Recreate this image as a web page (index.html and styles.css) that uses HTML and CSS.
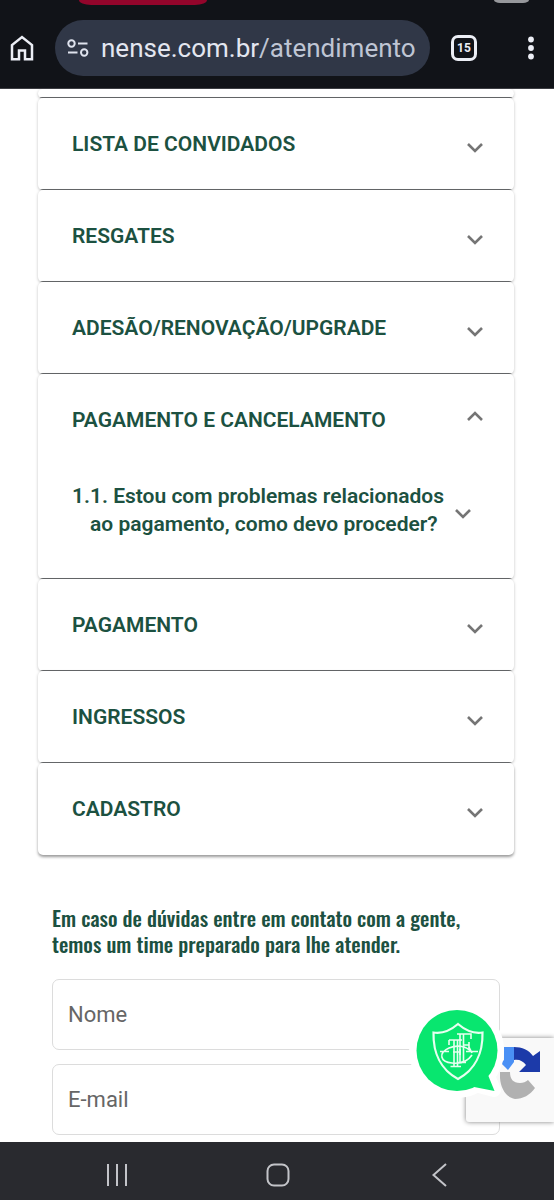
FILE: index.html
```html
<!DOCTYPE html>
<html lang="pt-BR">
<head>
<meta charset="utf-8">
<meta name="viewport" content="width=device-width, initial-scale=1">
<title>Atendimento</title>
<link rel="stylesheet" href="styles.css">
</head>
<body>
<svg class="defs" width="0" height="0" aria-hidden="true">
  <symbol id="chevron" viewBox="0 0 24 24"><path d="M5 12l7 7 7-7" fill="none" stroke="currentColor" stroke-width="2.6"/></symbol>
</svg>

<header class="browser">
  <div class="status"><span class="status-rec"></span><span class="status-battery"></span></div>
  <div class="toolbar">
    <button class="icon-button" aria-label="Página inicial">
      <svg width="24" height="26" viewBox="0 0 24 26"><path d="M2 24.200V10L12 2l10 8v14.200h-7v-8.700H9v8.700z" fill="none" stroke="#eceef5" stroke-width="2.500"/></svg>
    </button>
    <a class="address" href="#">
      <svg width="22" height="18" viewBox="0 0 22 18" fill="none" stroke="#dfe3ee" stroke-width="2"><circle cx="4.500" cy="4.500" r="3.200"/><path d="M11 4.500h9.500M1 13.500h9.500"/><circle cx="17.200" cy="13.500" r="3.200"/></svg>
      <span class="url">nense.com.br<span class="url-path">/atendimento</span></span>
    </a>
    <button class="tabs" aria-label="15 guias abertas">15</button>
    <button class="icon-button menu" aria-label="Mais opções">
      <svg width="6" height="24" viewBox="0 0 6 24" fill="#eceef5"><circle cx="3" cy="3.500" r="2.900"/><circle cx="3" cy="12" r="2.900"/><circle cx="3" cy="20.500" r="2.900"/></svg>
    </button>
  </div>
</header>

<main class="page">
  <div class="accordion">
    <section class="item item-previous"></section>
    <section class="item"><button class="item-header" aria-expanded="false">LISTA DE CONVIDADOS<svg class="chevron"><use href="#chevron"/></svg></button></section>
    <section class="item"><button class="item-header" aria-expanded="false">RESGATES<svg class="chevron"><use href="#chevron"/></svg></button></section>
    <section class="item"><button class="item-header" aria-expanded="false">ADESÃO/RENOVAÇÃO/UPGRADE<svg class="chevron"><use href="#chevron"/></svg></button></section>
    <section class="item">
      <button class="item-header" aria-expanded="true">PAGAMENTO E CANCELAMENTO<svg class="chevron"><use href="#chevron"/></svg></button>
      <div class="item-body">
        <button class="question" aria-expanded="false"><span class="question-text">1.1. Estou com problemas relacionados ao pagamento, como devo proceder?</span><svg class="chevron"><use href="#chevron"/></svg></button>
      </div>
    </section>
    <section class="item"><button class="item-header" aria-expanded="false">PAGAMENTO<svg class="chevron"><use href="#chevron"/></svg></button></section>
    <section class="item"><button class="item-header" aria-expanded="false">INGRESSOS<svg class="chevron"><use href="#chevron"/></svg></button></section>
    <section class="item"><button class="item-header" aria-expanded="false">CADASTRO<svg class="chevron"><use href="#chevron"/></svg></button></section>
  </div>

  <form class="contact">
    <h2 class="contact-title">Em caso de dúvidas entre em contato com a gente, temos um time preparado para lhe atender.</h2>
    <input class="field" type="text" placeholder="Nome" aria-label="Nome">
    <input class="field" type="email" placeholder="E-mail" aria-label="E-mail">
  </form>

  <div class="recaptcha">
    <svg width="44" height="54" viewBox="0 0 44 54">
      <path d="M4 1h10v15l-6 8-7-7 3-3z" fill="#4a90f5"/>
      <path d="M14 1c8 0 15 3 19 9l7-5v21H19l7-7c-3-4-7-6-12-5z" fill="#1c3aa9"/>
      <path d="M0 26h10c0 7 3 11 10 11 3 0 6-1 8-3l7 8c-5 7-12 11-20 11C5 51-1 40 0 26z" fill="#b1b1b1"/>
    </svg>
  </div>
  <button class="chat" aria-label="Abrir atendimento">
    <svg width="96" height="96" viewBox="0 0 96 96">
      <path d="M48 8a40.500 40.500 0 1 0 20 75.500L85 88 79 74A40.500 40.500 0 0 0 48 8z" fill="#fff" stroke="#fff" stroke-width="14" stroke-linejoin="round"/>
      <circle cx="48" cy="48.500" r="40.500" fill="#08e66f"/>
      <path d="M60 84l25.500 5L79 73z" fill="#08e66f"/>
      <g fill="none" stroke="#e7fff0" stroke-width="2.200">
        <path d="M24.500 30.500C34 32 42 28 49 22c7 6 15 10 24.500 8.500C74 51 66 68 49 77 32 68 24 51 24.500 30.500z"/>
        <g stroke-width="1.600">
          <path d="M45 38v26M48.500 38v26M41.500 64.500H52M40 38h13M40 38v5M44 50h7M51 47v6"/>
          <path d="M51 32v28M54.500 32v28M48 32h14v5M54 43h6M60 40v7M49 60.500h8"/>
          <path d="M62 50c-5-7-15-7-22-4-11 5-9 14 3 15 9 1 16-2 20-8M60 45l3 6M31 49.500h9M57 49.500h12"/>
        </g>
      </g>
    </svg>
  </button>
</main>

<nav class="system-nav" aria-label="Navegação do sistema">
  <button class="icon-button" aria-label="Recentes"><svg width="24" height="24" viewBox="0 0 24 24"><path d="M3 1v22M12 1v22M21 1v22" stroke="#c3c4c9" stroke-width="2"/></svg></button>
  <button class="icon-button" aria-label="Início"><svg width="24" height="24" viewBox="0 0 24 24"><rect x="1.500" y="1.500" width="21" height="21" rx="6.500" fill="none" stroke="#c3c4c9" stroke-width="2"/></svg></button>
  <button class="icon-button" aria-label="Voltar"><svg width="24" height="24" viewBox="0 0 24 24"><path d="M19 1L6.500 12 19 23" fill="none" stroke="#c3c4c9" stroke-width="2"/></svg></button>
</nav>
</body>
</html>
```

FILE: styles.css
```css
* {
  box-sizing: border-box;
}

body {
  margin: 0;
  height: 100vh;
  display: flex;
  flex-direction: column;
  background: #fff;
  font-family: Roboto, "Liberation Sans", sans-serif;
}

button {
  margin: 0;
  padding: 0;
  border: 0;
  background: none;
  font: inherit;
  color: inherit;
  text-align: left;
  cursor: pointer;
}

svg {
  display: block;
  flex: none;
}

.defs {
  position: absolute;
}

/* Browser chrome */
.browser {
  flex: none;
  background: #111318;
  border-bottom: 1px solid #3c3d42;
}

.status {
  display: flex;
  justify-content: space-between;
  align-items: flex-start;
  height: 20px;
  padding: 0 25px 0 79px;
}

.status-rec {
  width: 128px;
  height: 5px;
  background: #93052b;
  border-radius: 0 0 12px 12px / 0 0 5px 5px;
}

.status-battery {
  width: 35px;
  height: 3px;
  background: #96979b;
  border-radius: 0 0 6px 6px / 0 0 3px 3px;
}

.toolbar {
  display: flex;
  align-items: center;
  padding: 0 20px 12px 10px;
}

.address {
  flex: 1;
  display: flex;
  align-items: center;
  gap: 12px;
  height: 56px;
  margin: 0 21px;
  padding: 0 12px;
  overflow: hidden;
  border-radius: 28px;
  background: #303747;
  color: #e3e6f0;
  font-size: 26px;
  text-decoration: none;
  white-space: nowrap;
}

.url-path {
  color: #bfc5d4;
}

.tabs {
  width: 26px;
  height: 26px;
  border: 3px solid #eceef5;
  border-radius: 7px;
  color: #eceef5;
  font-size: 12px;
  font-weight: 700;
  line-height: 20px;
  text-align: center;
}

.menu {
  margin-left: 51px;
}

/* Page */
.page {
  position: relative;
  flex: 1;
  min-height: 0;
  overflow: hidden;
}

.accordion {
  margin: 0 40px 0 38px;
  color: #1c5141;
  font-size: 21px;
  font-weight: 600;
}

.item {
  padding-bottom: 1px;
  border-radius: 5px;
  background: linear-gradient(#66686a, #66686a) bottom / 100% 1px no-repeat #fff;
  box-shadow: 0 1px 3px rgba(0, 0, 0, 0.25);
}

.item:last-child {
  background: #fff;
  box-shadow: 0 2px 3px rgba(0, 0, 0, 0.4);
}

.item-previous {
  height: 9px;
}

.item-header {
  display: flex;
  align-items: center;
  justify-content: space-between;
  width: 100%;
  height: 91px;
  padding: 0 27px 0 34px;
}

.chevron {
  width: 24px;
  height: 24px;
  color: #757575;
}

.item-header[aria-expanded="true"] .chevron {
  transform: rotate(180deg);
}

.item-body {
  padding: 17px 39px 40px 34px;
}

.question {
  display: flex;
  align-items: center;
  justify-content: space-between;
  width: 100%;
  line-height: 28px;
}

.question-text {
  padding-left: 18px;
  text-indent: -18px;
}

.contact {
  display: flex;
  flex-direction: column;
  gap: 14px;
  padding: 50px 54px 0 52px;
}

.contact-title {
  margin: 0 0 8px;
  color: #1c5141;
  font-family: Oswald, "Roboto Condensed", "Liberation Sans Narrow", "Liberation Sans", sans-serif;
  font-size: 21px;
  font-weight: 500;
  line-height: 26px;
}

.field {
  width: 100%;
  height: 71px;
  padding: 0 15px;
  border: 1px solid #dcdcdc;
  border-radius: 7px;
  background: #fff;
  font-family: inherit;
  font-size: 22px;
  color: #333;
}

.field::placeholder {
  color: #666;
  opacity: 1;
}

/* Floating widgets */
.recaptcha {
  position: absolute;
  right: 0;
  bottom: 20px;
  width: 88px;
  height: 84px;
  padding: 8px 0 0 34px;
  border-radius: 3px 0 0 3px;
  background: #f9f9f9;
  box-shadow: 0 0 5px #808080;
}

.chat {
  position: absolute;
  right: 49px;
  bottom: 44px;
}

.chat svg {
  overflow: visible;
}

/* System navigation */
.system-nav {
  flex: none;
  display: flex;
  align-items: center;
  justify-content: space-around;
  height: 58px;
  padding: 8px 35px 0 37px;
  background: #292a2f;
}
```
